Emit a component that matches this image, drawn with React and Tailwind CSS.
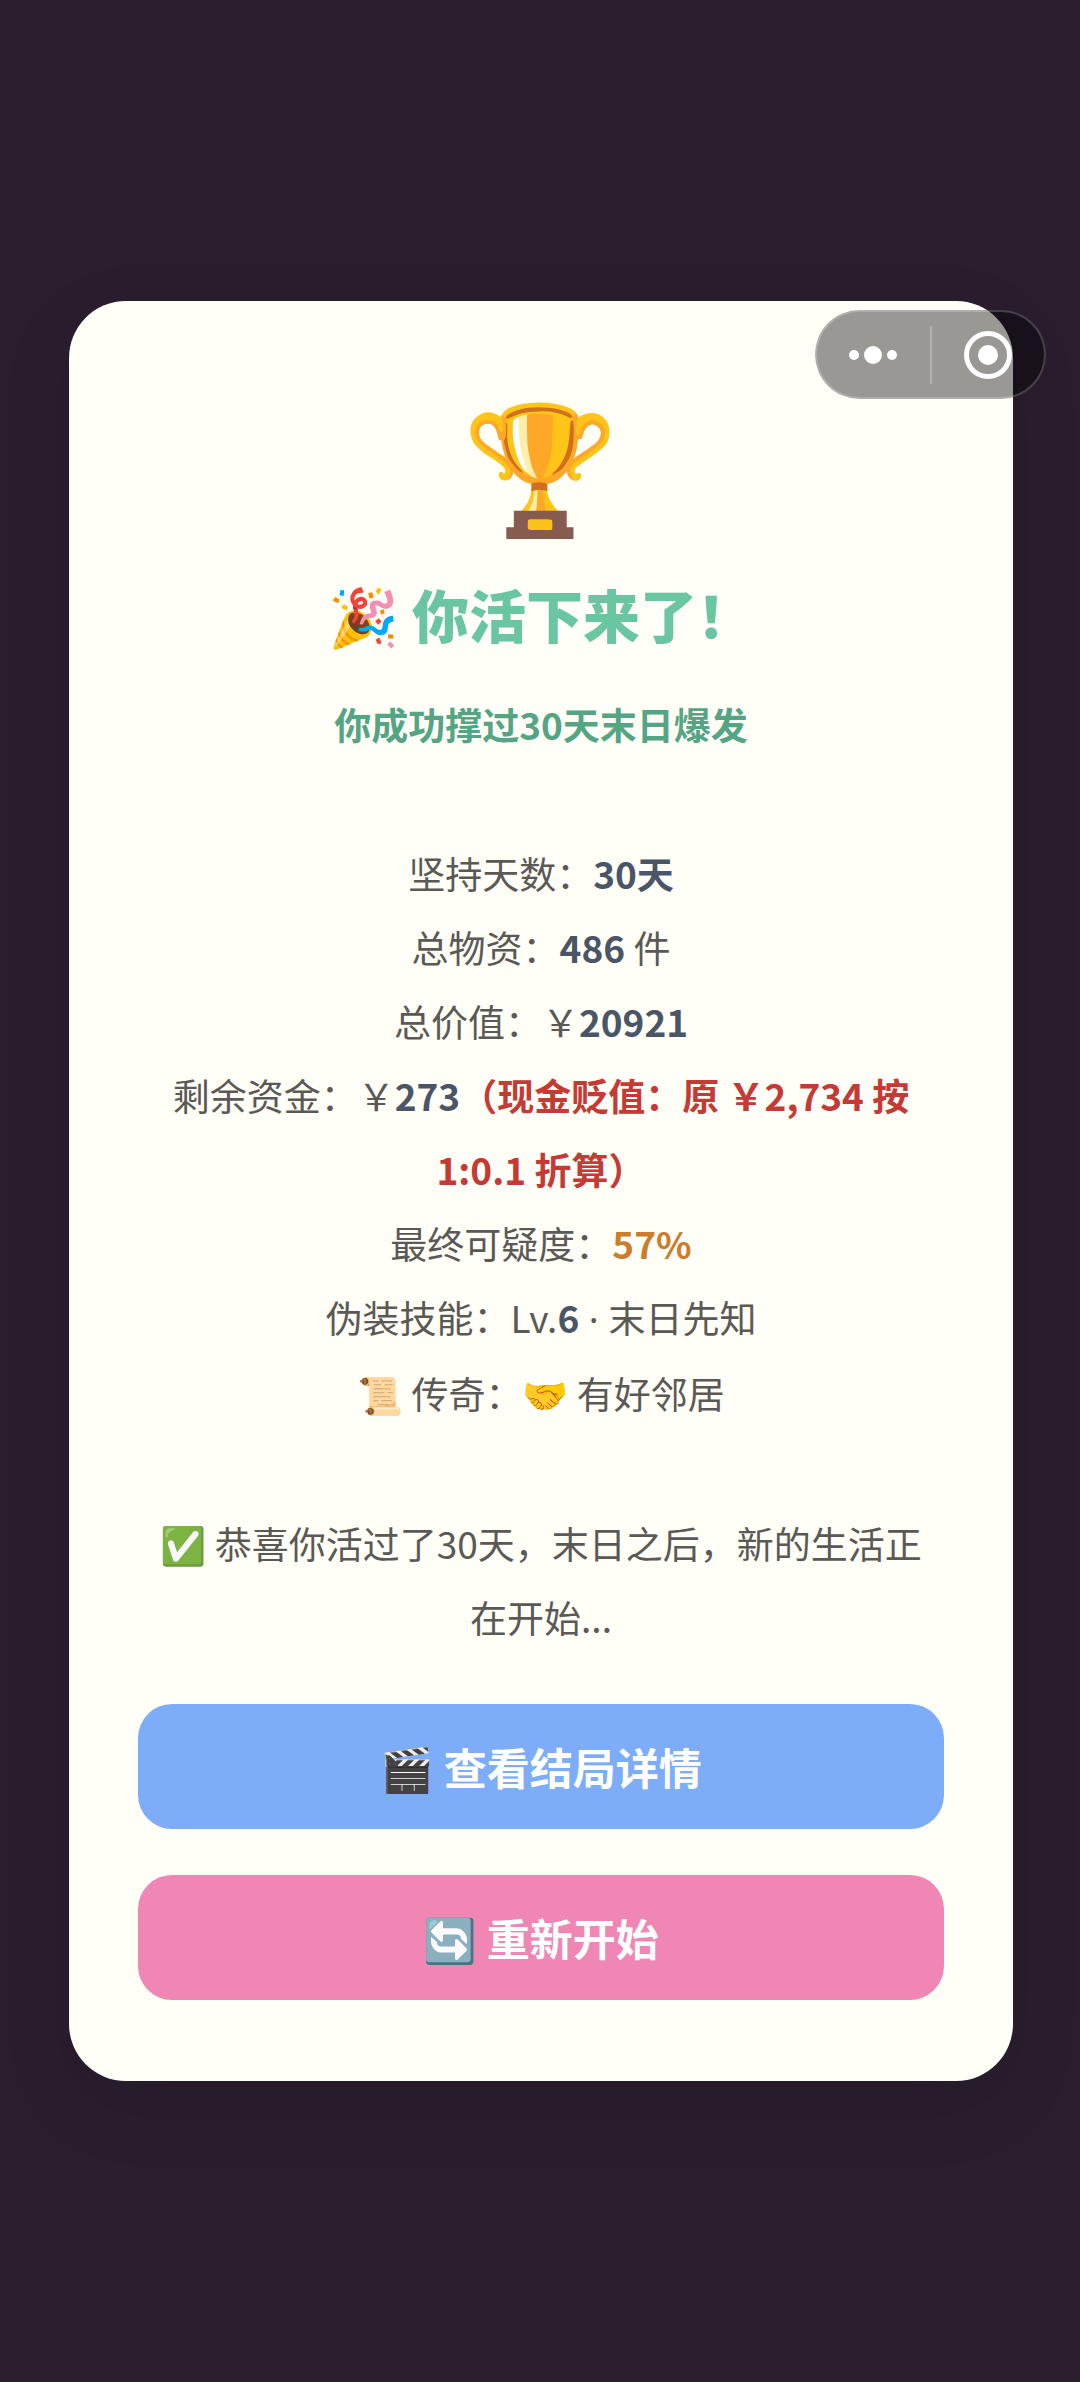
import React from 'react';

const stats = [
  { label: '坚持天数：', value: '30天' },
  { label: '总物资：', value: '486', suffix: ' 件' },
  { label: '总价值：￥', value: '20921' },
  { label: '剩余资金：￥', value: '273', warning: '（现金贬值：原 ￥2,734 按 1:0.1 折算）' },
  { label: '最终可疑度：', value: '57%', color: 'text-[#cb7d2c]' },
  { label: '伪装技能：Lv.', value: '6', title: '末日先知' },
  { label: '📜 传奇：🤝 有好邻居' },
];

const Capsule = () => (
  <div className="absolute top-[310px] right-[34px] flex h-[89px] w-[231px] items-center rounded-full border-2 border-white/20 bg-black/40">
    <button aria-label="更多" className="flex flex-1 items-center justify-center">
      <svg width="50" height="20" viewBox="0 0 50 20" fill="#fff">
        <circle cx="6" cy="10" r="5" />
        <circle cx="25" cy="10" r="9" />
        <circle cx="44" cy="10" r="5" />
      </svg>
    </button>
    <span className="h-[58px] w-[2px] bg-white/25" />
    <button aria-label="关闭" className="flex flex-1 items-center justify-center">
      <svg width="48" height="48" viewBox="0 0 48 48">
        <circle cx="24" cy="24" r="21.5" fill="none" stroke="#fff" strokeWidth="5" />
        <circle cx="24" cy="24" r="10" fill="#fff" />
      </svg>
    </button>
  </div>
);

const App = () => {
  return (
    <div className="relative flex min-h-screen items-center justify-center bg-[#2a1e2e] pr-[67px] pl-[69px] font-['Noto_Sans_CJK_SC','Noto_Color_Emoji',sans-serif]">
      <main className="w-full rounded-[57px] bg-[#fffef7] px-[69px] pt-[78px] pb-[81px] text-center shadow-[0_24px_72px_rgba(0,0,0,0.1)]">
        <div className="text-[126px] leading-[160px]">🏆</div>
        <h1 className="mt-[30px] text-[57px] leading-[88px] font-black text-[#6ac6a0]">🎉 你活下来了！</h1>
        <p className="mt-[30px] text-[37px] leading-[74px] font-bold text-[#54a583]">你成功撑过30天末日爆发</p>

        {/* Result summary */}
        <div className="mt-[75px] px-[14px] text-[37px] leading-[74px] text-[#5b5955]">
          {stats.map((item) => (
            <p key={item.label}>
              {item.label}
              {item.value && <strong className={item.color || 'text-[#4a5568]'}>{item.value}</strong>}
              {item.suffix}
              {item.title && (
                <>
                  <span className="font-['Noto_Sans']"> · </span>
                  {item.title}
                </>
              )}
              {item.warning && <strong className="text-[#c53a34]">{item.warning}</strong>}
            </p>
          ))}
          <p className="mt-[76px]">✅ 恭喜你活过了30天，末日之后，新的生活正在开始...</p>
        </div>

        <div className="mt-[50px] flex flex-col gap-[46px] text-[43px] font-bold text-white">
          <button className="h-[125px] rounded-[34px] bg-[#7dadf8]">🎬 查看结局详情</button>
          <button className="h-[125px] rounded-[34px] bg-[#ef86b3]">🔄 重新开始</button>
        </div>
      </main>
      <Capsule />
    </div>
  );
};

export default App;
